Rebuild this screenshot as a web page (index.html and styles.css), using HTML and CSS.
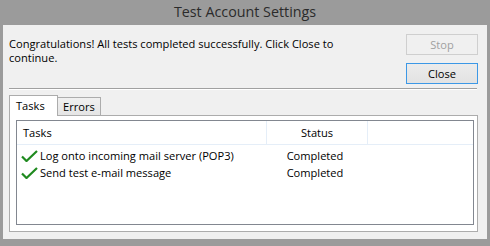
FILE: index.html
```html
<!DOCTYPE html>
<html lang="en">
<head>
    <meta charset="UTF-8">
    <meta name="viewport" content="width=device-width, initial-scale=1.0">
    <title>Test Account Settings</title>
    <link rel="stylesheet" href="styles.css">
</head>
<body>
    <div class="window">
        <div class="titlebar">Test Account Settings</div>
        <div class="client">
            <div class="top">
                <p class="message">Congratulations! All tests completed successfully. Click Close to<br>continue.</p>
                <div class="actions">
                    <button class="btn" disabled>Stop</button>
                    <button class="btn default">Close</button>
                </div>
            </div>
            <div class="separator"></div>
            <div class="tabs">
                <div class="tab active">Tasks</div>
                <div class="tab">Errors</div>
            </div>
            <div class="panel">
                <div class="list">
                    <div class="list-head">
                        <div class="col col-task">Tasks</div>
                        <div class="col col-status">Status</div>
                        <div class="col col-fill"></div>
                    </div>
                    <div class="row">
                        <div class="cell cell-task">
                            <svg class="check" width="17" height="12" viewBox="0 0 17 12"><path d="M1 6.5 L5.5 11 L16 1" fill="none" stroke="#1f8a1f" stroke-width="2.2"/></svg>
                            Log onto incoming mail server (POP3)
                        </div>
                        <div class="cell cell-status">Completed</div>
                    </div>
                    <div class="row">
                        <div class="cell cell-task">
                            <svg class="check" width="17" height="12" viewBox="0 0 17 12"><path d="M1 6.5 L5.5 11 L16 1" fill="none" stroke="#1f8a1f" stroke-width="2.2"/></svg>
                            Send test e-mail message
                        </div>
                        <div class="cell cell-status">Completed</div>
                    </div>
                </div>
            </div>
        </div>
    </div>
</body>
</html>
```

FILE: styles.css
```css
body {
    margin: 0;
    background-color: #9b9b9b;
    font-family: "Open Sans", "Noto Sans", sans-serif;
    font-size: 11.1px;
    color: #000;
}

.window {
    width: 490px;
    height: 246px;
    display: flex;
    flex-direction: column;
}

.titlebar {
    height: 25px;
    line-height: 23px;
    text-align: center;
    font-size: 14.3px;
    color: #2b2b2b;
}

.client {
    flex: 1;
    margin: 0 3px 7px 3px;
    background-color: #f0f0f0;
    padding: 9px 9px 7px 6px;
    display: flex;
    flex-direction: column;
}

.top {
    display: flex;
    justify-content: space-between;
}

.message {
    margin: 3px 0 0 0;
    line-height: 14px;
}

.actions {
    display: flex;
    flex-direction: column;
    gap: 8px;
}

.btn {
    width: 72px;
    height: 21px;
    padding: 0;
    font-family: inherit;
    font-size: 11.1px;
    background-color: #e1e1e1;
    border: 1px solid #adadad;
    color: #000;
}

.btn:disabled {
    background-color: #f0f0f0;
    border-color: #cfcfcf;
    color: #a0a0a0;
}

.btn.default {
    border-color: #3c98e6;
    background: linear-gradient(#ececec, #e2e2e2);
}

.separator {
    height: 1px;
    background-color: #a0a0a0;
    border-bottom: 1px solid #fff;
    margin: 4px 1px 0 0;
}

.tabs {
    display: flex;
    align-items: flex-end;
    margin-top: 4px;
    height: 21px;
}

.tab {
    height: 17px;
    line-height: 17px;
    padding: 0 5px 0 5px;
    border: 1px solid #acacac;
    border-bottom: none;
    border-left: none;
    background: linear-gradient(#f0f0f0, #e5e5e5);
}

.tab.active {
    height: 20px;
    line-height: 20px;
    width: 41px;
    padding: 0 0 0 6px;
    border-left: 1px solid #acacac;
    background: #fff;
    margin-bottom: -1px;
    position: relative;
}

.panel {
    flex: 1;
    background-color: #fff;
    border: 1px solid #acacac;
    padding: 4px 4px 6px 6px;
    display: flex;
}

.list {
    flex: 1;
    border: 1px solid #828790;
    background-color: #fff;
}

.list-head {
    display: flex;
    height: 23px;
    border-bottom: 1px solid #e5eef8;
}

.col {
    line-height: 23px;
    border-right: 1px solid #e5eef8;
}

.col-task {
    width: 243px;
    padding-left: 6px;
}

.col-status {
    width: 100px;
    text-align: center;
}

.col-fill {
    width: 105px;
    border-right: none;
}

.row {
    display: flex;
    height: 17px;
    line-height: 17px;
}

.list-head + .row {
    margin-top: 2px;
}

.cell-task {
    width: 244px;
    padding-left: 4px;
    display: flex;
    align-items: center;
    gap: 2px;
}

.cell-status {
    width: 100px;
    text-align: center;
}

.check {
    flex: none;
}
```
